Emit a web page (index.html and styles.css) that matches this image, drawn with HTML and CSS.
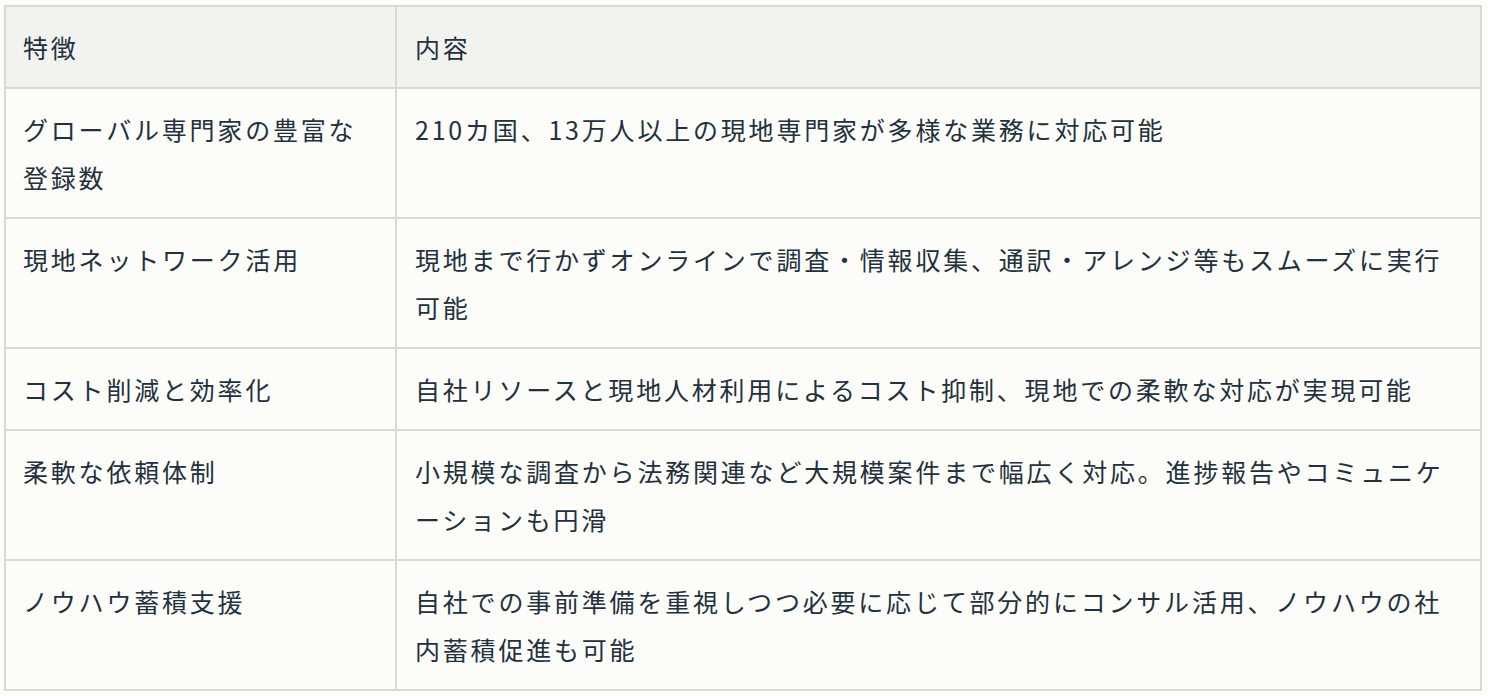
FILE: index.html
```html
<!DOCTYPE html>
<html lang="ja">
<head>
<meta charset="utf-8">
<title>特徴</title>
<link rel="stylesheet" href="styles.css">
</head>
<body>
<table class="features">
  <colgroup>
    <col class="col-feature">
    <col class="col-content">
  </colgroup>
  <thead>
    <tr><th>特徴</th><th>内容</th></tr>
  </thead>
  <tbody>
    <tr><td>グローバル専門家の豊富な登録数</td><td>210カ国、13万人以上の現地専門家が多様な業務に対応可能</td></tr>
    <tr><td>現地ネットワーク活用</td><td>現地まで行かずオンラインで調査・情報収集、通訳・アレンジ等もスムーズに実行可能</td></tr>
    <tr><td>コスト削減と効率化</td><td>自社リソースと現地人材利用によるコスト抑制、現地での柔軟な対応が実現可能</td></tr>
    <tr><td>柔軟な依頼体制</td><td>小規模な調査から法務関連など大規模案件まで幅広く対応。進捗報告やコミュニケーションも円滑</td></tr>
    <tr><td>ノウハウ蓄積支援</td><td>自社での事前準備を重視しつつ必要に応じて部分的にコンサル活用、ノウハウの社内蓄積促進も可能</td></tr>
  </tbody>
</table>
</body>
</html>
```

FILE: styles.css
```css
html, body {
  margin: 0;
  padding: 0;
  background: #fcfcf9;
}

body {
  padding: 5px 6px 0 4px;
  font-family: "Noto Sans CJK JP", "Noto Sans", sans-serif;
  color: #22313e;
}

.features {
  width: 100%;
  border-collapse: collapse;
  table-layout: fixed;
  border: 2px solid #d9d9d2;
  font-size: 25px;
  line-height: 48px;
  letter-spacing: 2.8px;
}

.col-feature {
  width: 391px;
}

.features th,
.features td {
  border: 2px solid #d9d9d2;
  padding: 16px 17px 16px 17px;
  text-align: left;
  vertical-align: top;
  font-weight: 400;
}

.features td + td,
.features th + th {
  padding-left: 18px;
}

.features thead th {
  background: #f2f2ee;
}
```
